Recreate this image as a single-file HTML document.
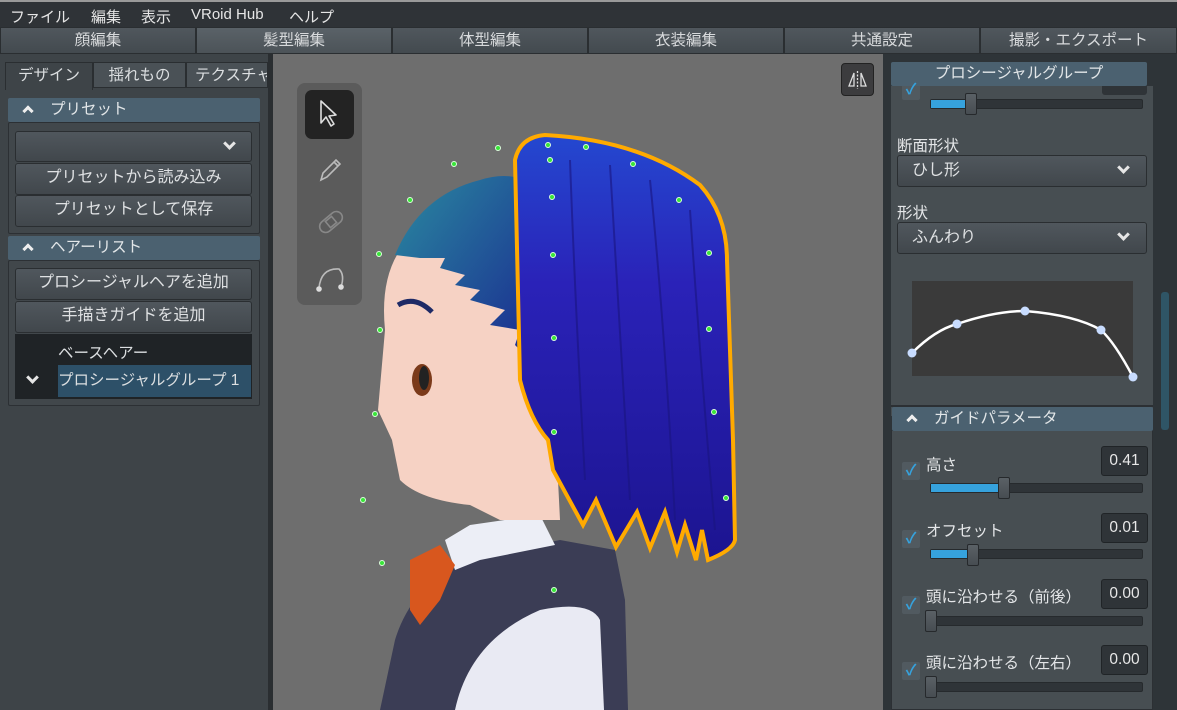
<!DOCTYPE html>
<html><head><meta charset="utf-8"><style>
*{box-sizing:border-box;margin:0;padding:0}
body{width:1177px;height:710px;overflow:hidden;background:#2e3236;font-family:"Liberation Sans","Noto Sans CJK JP",sans-serif;color:#dcdfe1;font-size:15px;position:relative}
.a{position:absolute}
.menu{left:0;top:0;width:1177px;height:27px;background:#2f3337;border-top:2px solid #9a9a9a}
.menu span{position:absolute;top:4px;font-size:15px;color:#e6e6e6}
.tab{top:27px;height:27px;background:linear-gradient(#50575d,#434a4f);border:1px solid #2a2e31;text-align:center;line-height:26px;font-size:15.5px;color:#d8dadc}
.btn{background:linear-gradient(#50575d,#41474c);border:1px solid #2a2e31;border-radius:3px;text-align:center;line-height:28px;font-size:16px;color:#dfe1e3}
.hdr{background:#4b6170;height:24px;line-height:24px;font-size:15.5px;color:#e2e6e8;border-radius:2px}
.chev{display:inline-block;width:8px;height:8px;border-left:3px solid #eee;border-top:3px solid #eee;transform:rotate(45deg);margin:0 18px 0 16px;position:relative;top:1px}
.dn{position:absolute;width:9px;height:9px;border-right:3px solid #e6e6e6;border-bottom:3px solid #e6e6e6;transform:rotate(45deg)}
.track{height:10px;background:#2f3438;border:1px solid #262a2d;border-radius:2px}
.fill{height:8px;background:#36a2dd}
.knob{width:12px;height:22px;background:linear-gradient(#5a6166,#474d52);border:1px solid #26292c;border-radius:2px}
.val{width:47px;height:30px;background:#2f3438;border:1px solid #202427;border-radius:3px;text-align:center;line-height:28px;font-size:15.5px;color:#e8e8e8}
.cb{width:18px;height:18px;background:#515a60;border-radius:2px;color:#36a2dd;font-size:15px;line-height:18px;text-align:center;font-weight:bold}
.lbl{font-size:15.5px;color:#e4e6e8}
</style></head><body>
<div class="a menu">
<span style="left:10px">ファイル</span><span style="left:91px">編集</span><span style="left:141px">表示</span><span style="left:191px">VRoid Hub</span><span style="left:289px">ヘルプ</span>
</div>
<div class="a tab" style="left:0;width:196px">顔編集</div>
<div class="a tab" style="left:196px;width:196px;background:linear-gradient(#5a6268,#4c5358)">髪型編集</div>
<div class="a tab" style="left:392px;width:196px">体型編集</div>
<div class="a tab" style="left:588px;width:196px">衣装編集</div>
<div class="a tab" style="left:784px;width:196px">共通設定</div>
<div class="a tab" style="left:980px;width:197px">撮影・エクスポート</div>

<!-- left panel -->
<div class="a" style="left:0;top:54px;width:268px;height:656px;background:#3e4448"></div>
<div class="a" style="left:268px;top:54px;width:5px;height:656px;background:#2a2e31"></div>
<div class="a" style="left:5px;top:62px;width:88px;height:28px;line-height:26px;text-align:center;background:#3e4448;border:1px solid #2a2e31;border-bottom:none;font-size:15.5px">デザイン</div>
<div class="a" style="left:93px;top:62px;width:93px;height:26px;line-height:26px;text-align:center;background:#4a5156;border:1px solid #2a2e31;font-size:15.5px">揺れもの</div>
<div class="a" style="left:186px;top:62px;width:82px;height:26px;line-height:26px;padding-left:8px;white-space:nowrap;overflow:hidden;background:#4a5156;border:1px solid #2a2e31;font-size:15.5px">テクスチャ</div>
<div class="a" style="left:8px;top:122px;width:252px;height:112px;border:1px solid #2c3034;background:#41474b;border-radius:2px"></div>
<div class="a hdr" style="left:8px;top:98px;width:252px"><span class="chev"></span>プリセット</div>
<div class="a btn" style="left:15px;top:131px;width:237px;height:31px"><span class="dn" style="right:17px;top:7px"></span></div>
<div class="a btn" style="left:15px;top:163px;width:237px;height:32px">プリセットから読み込み</div>
<div class="a btn" style="left:15px;top:195px;width:237px;height:32px">プリセットとして保存</div>
<div class="a" style="left:8px;top:260px;width:252px;height:146px;border:1px solid #2c3034;background:#41474b;border-radius:2px"></div>
<div class="a hdr" style="left:8px;top:236px;width:252px"><span class="chev"></span>ヘアーリスト</div>
<div class="a btn" style="left:15px;top:268px;width:237px;height:32px">プロシージャルヘアを追加</div>
<div class="a btn" style="left:15px;top:301px;width:237px;height:32px">手描きガイドを追加</div>
<div class="a" style="left:15px;top:334px;width:237px;height:65px;background:#1f2326"></div>
<div class="a" style="left:58px;top:341px;font-size:15.5px">ベースヘアー</div>
<div class="a" style="left:58px;top:365px;width:193px;height:32px;background:#2d5068;line-height:32px;font-size:15.5px">プロシージャルグループ 1</div>
<span class="dn" style="left:28px;top:373px"></span>

<!-- viewport -->
<div class="a" style="left:273px;top:54px;width:610px;height:656px;background:#6e6e6e;overflow:hidden">
<svg width="610" height="656" style="position:absolute;left:0;top:0">
<defs>
<linearGradient id="hg" x1="0" y1="0" x2="0" y2="1"><stop offset="0" stop-color="#2448d0"/><stop offset=".35" stop-color="#2a22b8"/><stop offset="1" stop-color="#1c1490"/></linearGradient>
<linearGradient id="tg" x1="0" y1="0" x2="1" y2="1"><stop offset="0" stop-color="#2a8aa0"/><stop offset="1" stop-color="#1a2a90"/></linearGradient>
</defs>
<g transform="translate(-273,-54)">
<path d="M380,710 L395,640 Q410,590 460,560 L560,540 L615,550 L625,600 L628,710 Z" fill="#3b3d55"/>
<path d="M455,710 Q470,640 540,610 Q590,600 600,620 L604,710 Z" fill="#e9eaf3"/>
<path d="M445,540 L470,525 L540,515 L555,545 L480,560 L455,570 Z" fill="#eceef6"/>
<path d="M410,560 L440,545 L455,565 L440,600 L420,625 L410,610 Z" fill="#d8571e"/>
<path d="M400,250 Q380,280 385,330 L378,410 L392,440 L400,480 Q420,500 470,505 L500,520 L560,520 L555,420 L545,300 L520,220 Q450,210 400,250 Z" fill="#f6d2c4"/>
<path d="M395,255 Q420,195 480,180 Q505,172 525,180 L530,360 L515,345 L520,330 L490,325 L505,310 L470,300 L480,290 L455,285 L465,275 L440,268 L445,258 L420,258 Z" fill="url(#tg)"/>
<path d="M398,305 Q415,295 432,312" stroke="#1e2a66" stroke-width="5" fill="none"/>
<ellipse cx="422" cy="380" rx="10" ry="16" fill="#7b3a1a"/>
<ellipse cx="424" cy="378" rx="5" ry="12" fill="#222"/>
<path d="M515,160 Q520,137 545,135 Q640,140 700,185 Q727,215 727,260 L733,440 L735,540 Q733,550 708,560 L702,530 L696,560 L685,525 L677,552 L665,512 L650,548 L637,512 L616,547 L596,500 L583,525 L553,470 L548,440 Q530,420 520,380 Z" fill="url(#hg)"/>
<g stroke="#1a1580" stroke-width="2" opacity=".6" fill="none"><path d="M570,160 Q575,300 585,480"/><path d="M610,165 Q620,330 630,500"/><path d="M650,180 Q665,330 675,520"/><path d="M690,210 Q700,360 715,530"/></g>
<path d="M515,160 Q520,137 545,135 Q640,140 700,185 Q727,215 727,260 L733,440 L735,540 Q733,550 708,560 L702,530 L696,560 L685,525 L677,552 L665,512 L650,548 L637,512 L616,547 L596,500 L583,525 L553,470 L548,440 Q530,420 520,380 Z" fill="none" stroke="#ffaa00" stroke-width="4"/>
<g fill="#39e639" stroke="#dfd" stroke-width="1">
<circle cx="498" cy="148" r="2.5"/><circle cx="454" cy="164" r="2.5"/><circle cx="410" cy="200" r="2.5"/><circle cx="379" cy="254" r="2.5"/><circle cx="380" cy="330" r="2.5"/><circle cx="375" cy="414" r="2.5"/><circle cx="363" cy="500" r="2.5"/><circle cx="382" cy="563" r="2.5"/><circle cx="554" cy="590" r="2.5"/><circle cx="548" cy="145" r="2.5"/><circle cx="586" cy="147" r="2.5"/><circle cx="633" cy="164" r="2.5"/><circle cx="679" cy="200" r="2.5"/><circle cx="709" cy="253" r="2.5"/><circle cx="709" cy="329" r="2.5"/><circle cx="714" cy="412" r="2.5"/><circle cx="726" cy="498" r="2.5"/><circle cx="552" cy="197" r="2.5"/><circle cx="553" cy="255" r="2.5"/><circle cx="554" cy="338" r="2.5"/><circle cx="554" cy="432" r="2.5"/><circle cx="550" cy="160" r="2.5"/>
</g>
</g>
</svg>
<div class="a" style="left:24px;top:29px;width:65px;height:222px;background:#5b5b5b;border-radius:8px"></div>
<div class="a" style="left:32px;top:36px;width:49px;height:49px;background:#232323;border-radius:7px"></div>
<svg class="a" style="left:24px;top:29px" width="65" height="222" fill="none" stroke="#ddd" stroke-width="1.6">
<path d="M24,18 L24,40 L29,34 L34,43 L37,41 L32,33 L39,32 Z" stroke-linejoin="round"/>
<path d="M24,97 L26,90 L39,77 L43,81 L30,94 Z M37,79 L41,83" stroke="#bbb"/>
<g stroke="#888"><rect x="21" y="133" width="26" height="12" rx="6" transform="rotate(-40 34 139)"/><rect x="30" y="135" width="8" height="8" transform="rotate(-40 34 139)"/></g>
<path d="M22,205 Q24,185 42,186 Q48,192 44,204" stroke="#bbb"/><circle cx="22" cy="206" r="2" fill="#ddd"/><circle cx="44" cy="204" r="2" fill="#ddd"/>
</svg>
<div class="a" style="left:568px;top:9px;width:33px;height:33px;background:#3c3c3e;border:1px solid #222;border-radius:4px"></div>
<svg class="a" style="left:568px;top:9px" width="33" height="33" fill="none" stroke="#ddd" stroke-width="1.3"><path d="M13,10 L8,23 L13,23 Z M20,10 L25,23 L20,23 Z"/><path d="M16.5,8 V26" stroke-dasharray="2 1.5"/></svg>
</div>

<!-- right panel -->
<div class="a" style="left:883px;top:54px;width:294px;height:656px;background:#2e3438"></div>
<div class="a" style="left:891px;top:86px;width:262px;height:330px;background:#474e52"></div>
<div class="a" style="left:891px;top:430px;width:262px;height:280px;background:#474e52;border:1px solid #2c3034"></div>
<div class="a" style="left:1161px;top:292px;width:8px;height:138px;background:#2f5566;border-radius:3px"></div>
<div class="a hdr" style="left:891px;top:62px;width:256px;text-align:center">プロシージャルグループ</div>
<div class="a cb" style="left:902px;top:86px;height:14px;border-radius:0 0 2px 2px;line-height:8px">✓</div>
<div class="a" style="left:1102px;top:86px;width:45px;height:9px;background:#2f3438;border-radius:0 0 3px 3px"></div>
<div class="a track" style="left:930px;top:99px;width:213px"><div class="fill" style="width:36px"></div></div>
<div class="a knob" style="left:965px;top:93px"></div>
<div class="a lbl" style="left:897px;top:134px">断面形状</div>
<div class="a btn" style="left:897px;top:155px;width:250px;height:32px;text-align:left;padding-left:14px;line-height:30px">ひし形<span class="dn" style="right:18px;top:7px"></span></div>
<div class="a lbl" style="left:897px;top:201px">形状</div>
<div class="a btn" style="left:897px;top:222px;width:250px;height:32px;text-align:left;padding-left:14px;line-height:30px">ふんわり<span class="dn" style="right:18px;top:7px"></span></div>
<svg class="a" style="left:905px;top:275px" width="240" height="110">
<rect x="7" y="6" width="221" height="95" fill="#3a3a3a"/>
<path d="M7,78 Q30,55 52,49 Q90,36 120,36 Q170,40 196,55 Q210,68 228,102" stroke="#fff" stroke-width="2.5" fill="none"/>
<g fill="#c8dcff"><circle cx="7" cy="78" r="4.5"/><circle cx="52" cy="49" r="4.5"/><circle cx="120" cy="36" r="4.5"/><circle cx="196" cy="55" r="4.5"/><circle cx="228" cy="102" r="4.5"/></g>
</svg>
<div class="a" style="left:891px;top:405px;width:262px;height:2px;background:#2c3034"></div>
<div class="a hdr" style="left:892px;top:407px;width:261px"><span class="chev"></span>ガイドパラメータ</div>

<div class="a cb" style="left:902px;top:462px">✓</div>
<div class="a lbl" style="left:926px;top:453px">高さ</div>
<div class="a val" style="left:1101px;top:446px">0.41</div>
<div class="a track" style="left:930px;top:483px;width:213px"><div class="fill" style="width:68px"></div></div>
<div class="a knob" style="left:998px;top:477px"></div>

<div class="a cb" style="left:902px;top:530px">✓</div>
<div class="a lbl" style="left:926px;top:519px">オフセット</div>
<div class="a val" style="left:1101px;top:513px">0.01</div>
<div class="a track" style="left:930px;top:549px;width:213px"><div class="fill" style="width:38px"></div></div>
<div class="a knob" style="left:967px;top:544px"></div>

<div class="a cb" style="left:902px;top:596px">✓</div>
<div class="a lbl" style="left:926px;top:585px">頭に沿わせる（前後）</div>
<div class="a val" style="left:1101px;top:579px">0.00</div>
<div class="a track" style="left:930px;top:616px;width:213px"></div>
<div class="a knob" style="left:925px;top:610px"></div>

<div class="a cb" style="left:902px;top:662px">✓</div>
<div class="a lbl" style="left:926px;top:651px">頭に沿わせる（左右）</div>
<div class="a val" style="left:1101px;top:645px">0.00</div>
<div class="a track" style="left:930px;top:682px;width:213px"></div>
<div class="a knob" style="left:925px;top:676px"></div>
</body></html>
